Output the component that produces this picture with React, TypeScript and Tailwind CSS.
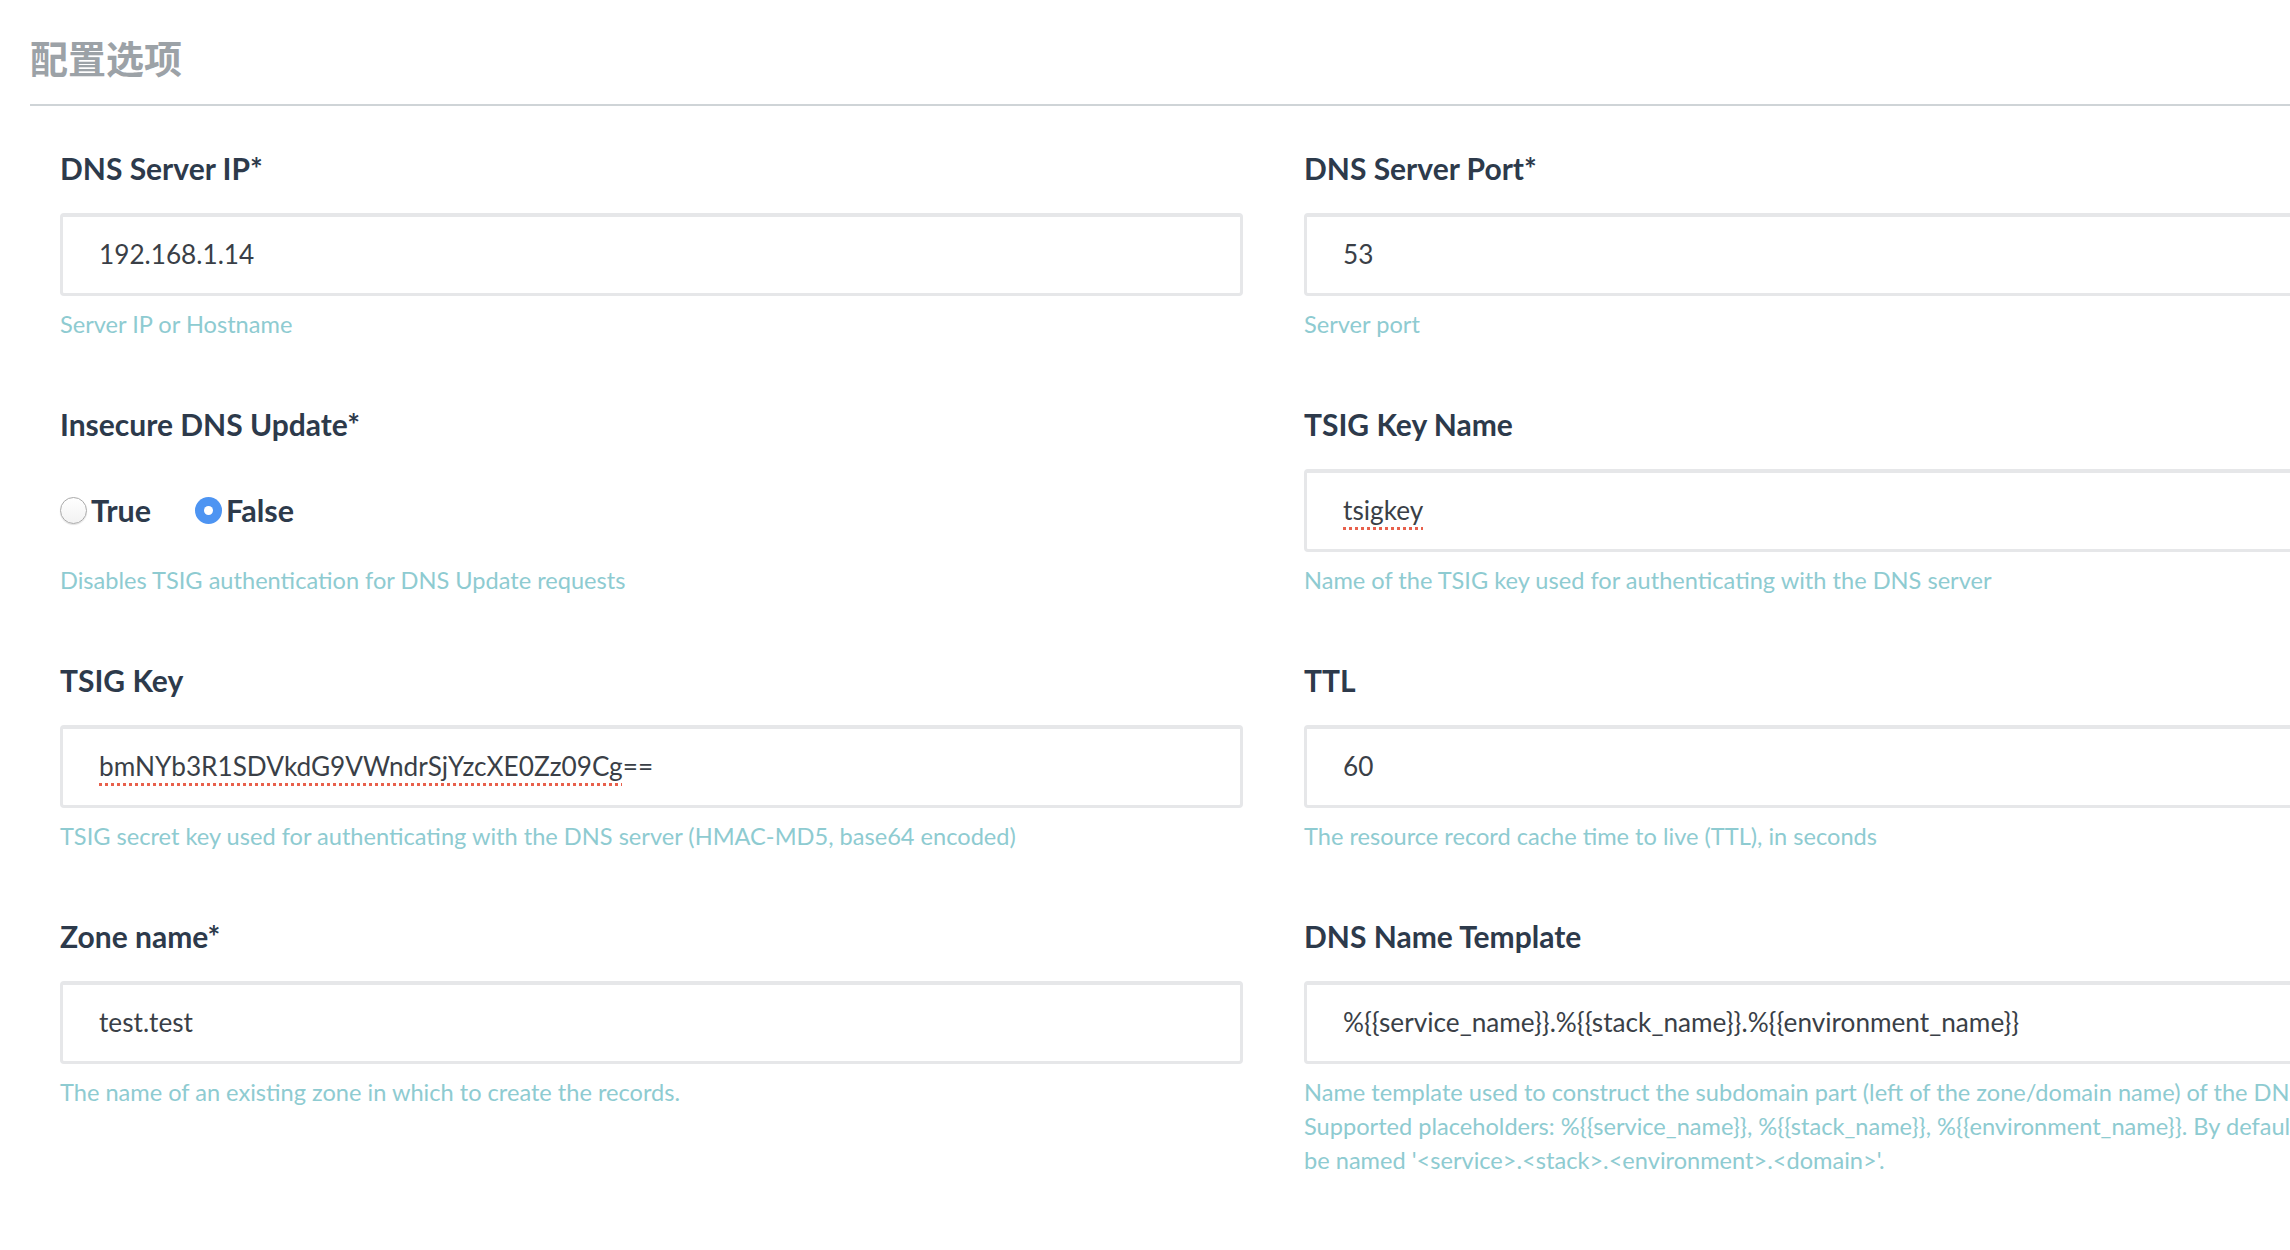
import React from "react";

type Field = {
  label: string;
  value?: React.ReactNode;
  help: React.ReactNode;
  radio?: boolean;
};

const Squiggle = ({ children }: { children: React.ReactNode }) => (
  <span className="underline decoration-dotted decoration-[#e8604c] decoration-[3px] underline-offset-[7px]">
    {children}
  </span>
);

const leftFields: Field[] = [
  {
    label: "DNS Server IP*",
    value: "192.168.1.14",
    help: "Server IP or Hostname",
  },
  {
    label: "Insecure DNS Update*",
    radio: true,
    help: "Disables TSIG authentication for DNS Update requests",
  },
  {
    label: "TSIG Key",
    value: (
      <>
        <Squiggle>bmNYb3R1SDVkdG9VWndrSjYzcXE0Zz09Cg</Squiggle>==
      </>
    ),
    help: "TSIG secret key used for authenticating with the DNS server (HMAC-MD5, base64 encoded)",
  },
  {
    label: "Zone name*",
    value: "test.test",
    help: "The name of an existing zone in which to create the records.",
  },
];

const rightFields: Field[] = [
  {
    label: "DNS Server Port*",
    value: "53",
    help: "Server port",
  },
  {
    label: "TSIG Key Name",
    value: <Squiggle>tsigkey</Squiggle>,
    help: "Name of the TSIG key used for authenticating with the DNS server",
  },
  {
    label: "TTL",
    value: "60",
    help: "The resource record cache time to live (TTL), in seconds",
  },
  {
    label: "DNS Name Template",
    value: "%{{service_name}}.%{{stack_name}}.%{{environment_name}}",
    help: (
      <>
        <span className="block whitespace-nowrap">
          Name template used to construct the subdomain part (left of the zone/domain name) of the DNS records.
        </span>
        <span className="block whitespace-nowrap">
          Supported placeholders: %{"{{"}service_name{"}}"}, %{"{{"}stack_name{"}}"}, %{"{{"}environment_name{"}}"}. By default DNS entries will
        </span>
        <span className="block whitespace-nowrap">
          be named '&lt;service&gt;.&lt;stack&gt;.&lt;environment&gt;.&lt;domain&gt;'.
        </span>
      </>
    ),
  },
];

const Radio = ({ checked, label }: { checked: boolean; label: string }) => (
  <label className="flex items-center gap-[4px]">
    {checked ? (
      <span className="flex h-[27px] w-[27px] items-center justify-center rounded-full bg-[#4d94f2]">
        <span className="h-[9px] w-[9px] rounded-full bg-white" />
      </span>
    ) : (
      <span className="h-[27px] w-[27px] rounded-full border border-[#a9a9a9] bg-gradient-to-b from-white to-[#f2f2f2] shadow-[0_1px_1px_rgba(0,0,0,0.12)]" />
    )}
    <span className="text-[30.5px] font-bold text-[#2d3a4b]">{label}</span>
  </label>
);

const FieldBlock = ({ field }: { field: Field }) => (
  <div className="flex flex-col">
    <div className="h-[36px] text-[30px] font-bold leading-[36px] text-[#2d3a4b]">
      {field.label}
    </div>

    {field.radio ? (
      <div className="mt-[27px] flex h-[83px] items-center gap-[44px]">
        <Radio checked={false} label="True" />
        <Radio checked={true} label="False" />
      </div>
    ) : (
      <div className="mt-[27px] flex h-[83px] items-center rounded-[4px] border-[3px] border-t-[4px] border-[#e6e7e9] bg-white pl-[36px] text-[26.2px] text-[#3a3f47]">
        {field.value}
      </div>
    )}

    <div className="mt-[11px] text-[23.6px] leading-[34px] text-[#8ecbd1]">
      {field.help}
    </div>
  </div>
);

const App = () => {
  return (
    <div
      className="h-[1250px] w-full overflow-hidden bg-white"
      style={{ fontFamily: "Lato, 'Noto Sans CJK SC', sans-serif" }}
    >
      <div className="w-[2600px] pl-[30px] pt-[33px]">
        <h2 className="h-[50px] text-[38px] font-bold leading-[50px] text-[#9ca2a7]">
          配置选项
        </h2>

        <div className="mt-[21px] h-[2px] bg-[#cfd4d7]" />

        <div className="mt-[44px] grid grid-cols-[1183px_1183px] gap-x-[61px] pl-[30px]">
          <div className="flex flex-col gap-[65px]">
            {leftFields.map((f) => (
              <FieldBlock key={f.label} field={f} />
            ))}
          </div>

          <div className="flex flex-col gap-[65px]">
            {rightFields.map((f) => (
              <FieldBlock key={f.label} field={f} />
            ))}
          </div>
        </div>
      </div>
    </div>
  );
};

export default App;
